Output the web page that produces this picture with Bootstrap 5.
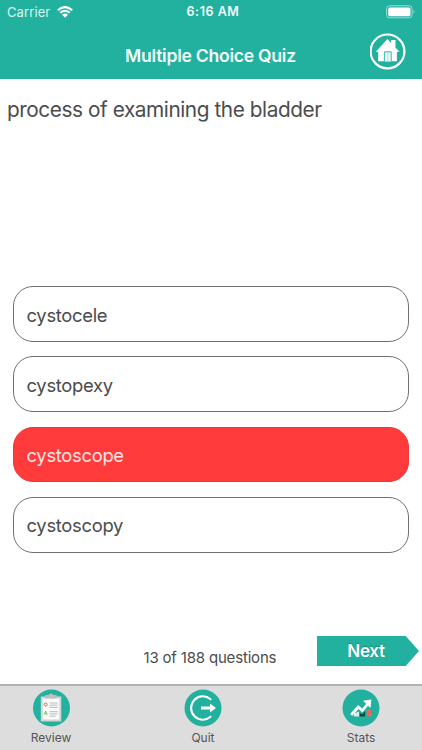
<!DOCTYPE html>
<html lang="en">
<head>
<meta charset="utf-8">
<meta name="viewport" content="width=device-width, initial-scale=1">
<title>Multiple Choice Quiz</title>
<link href="https://cdn.jsdelivr.net/npm/bootstrap@5.3.0/dist/css/bootstrap.min.css" rel="stylesheet">
<style>
  :root { --teal: #22b19f; }
  body { font-family: Inter, "Liberation Sans", sans-serif; color: #4c4c4c; background: #fff; }
  .screen { height: 750px; }
  .top-area { height: 79px; background: var(--teal); }
  .status-row { height: 24px; font-size: 13px; line-height: 24px; }
  .status-row > div { flex: 1 1 0; }
  .carrier { padding-left: 7px; letter-spacing: .1px; color: #dcf6f2; }
  .wifi { margin-left: 7px; }
  .clock { font-weight: 600; font-size: 12.5px; letter-spacing: .55px; padding: 0 0 1px 3px; color: #effbf9; }
  .battery { padding-right: 6px; }
  .title-row { height: 55px; grid-template-columns: 52px 1fr 52px; padding-top: 1px; }
  .quiz-title { font-size: 17.6px; font-weight: 600; line-height: 61px; letter-spacing: -.27px; padding-right: 1px; color: #f2fcfa; }
  .question { font-size: 20.8px; line-height: 28px; height: 207px; padding: 17px 7px 0; letter-spacing: -.44px; }
  .answers { gap: 14.6px; padding: 0 13px 0 12.5px; }
  .answer { height: 55.7px; border: 1px solid #707070; border-radius: 20px; font-size: 18.4px; letter-spacing: -.3px; line-height: 1; padding: 2px 13px 0; background: #fff; color: #4c4c4c; }
  .answer.wrong { background: #ff3b3b; border-color: #e83838; color: #ffe4e4; }
  .progress-line { height: 48px; padding-right: 3px; }
  .counter { font-size: 15px; line-height: 20px; letter-spacing: -.18px; padding: 12px 0 0 143.5px; }
  .next-btn { width: 102px; height: 30px; color: #fff; font-size: 17px; font-weight: 600; line-height: 29px; letter-spacing: -.3px; padding: 0 4px 0 0; background: var(--teal); clip-path: polygon(0 0, 87% 0, 100% 50%, 87% 100%, 0 100%); text-shadow: 0 -1px 1px #1a8a7b; }
  .tab-strip { height: 66px; background: #ddd; border-top: 2px solid #b2b2b2; font-size: 12px; line-height: 16px; color: #555; padding: 0 31px 0 21px; }
  .tab-strip a { width: 60px; color: inherit; padding-top: 3px; gap: 3px; }
  .tab-mid { margin-right: 6px; }
  svg { display: block; }
</style>
<script src="https://cdn.jsdelivr.net/npm/bootstrap@5.3.0/dist/js/bootstrap.bundle.min.js"></script>
</head>
<body>
<div class="screen d-flex flex-column overflow-hidden">
  <header class="top-area text-white">
    <div class="status-row d-flex align-items-center">
      <div class="carrier d-flex align-items-center">
        <span>Carrier</span>
        <svg class="wifi" width="16" height="12" viewBox="0 0 16 12" fill="none" stroke="#fff" stroke-width="2.1"><path d="M.8 4.2Q8-2.1 15.2 4.2M3.3 6.8Q8 2.7 12.7 6.8"/><path d="M5 8.7Q8 6.2 11 8.7L8 11.7Z" fill="#fff" stroke="none"/></svg>
      </div>
      <div class="clock text-center"><span>6:16 AM</span></div>
      <div class="battery d-flex justify-content-end">
        <svg width="30" height="14" viewBox="0 0 30 14"><rect x=".6" y=".8" width="25.5" height="12" rx="3" fill="none" stroke="#9bded5"/><rect x="2.2" y="2.4" width="22.3" height="8.8" rx="1.6" fill="#fff"/><path d="M27.6 4.9q2 1.9 0 3.8z" fill="#9bded5"/></svg>
      </div>
    </div>
    <div class="title-row d-grid align-items-start">
      <span></span>
      <div class="quiz-title text-center"><span>Multiple Choice Quiz</span></div>
      <a href="#" class="d-block pt-2" aria-label="Home">
        <svg width="36" height="37" viewBox="0 0 36 37"><circle cx="17.5" cy="18.4" r="16.9" fill="none" stroke="#fff" stroke-width="2.2"/><path d="M5.8 18.8L17.5 6.1l3.6 3.9V7h4.4v7.8l4 4h-2.6v9.4H8.2v-9.4z" fill="#fff"/><path d="M14.4 28.4v-9.6h6.8v9.6" fill="#e8faf7" stroke="#22b19f" stroke-width=".9"/><path d="M17.8 19.4v8.6" stroke="#8fd8cf" stroke-width=".7"/></svg>
      </a>
    </div>
  </header>
  <main class="flex-grow-1">
    <div class="question"><span>process of examining the bladder</span></div>
    <div class="answers d-flex flex-column">
      <button class="answer d-flex align-items-center"><span>cystocele</span></button>
      <button class="answer d-flex align-items-center"><span>cystopexy</span></button>
      <button class="answer wrong d-flex align-items-center"><span>cystoscope</span></button>
      <button class="answer d-flex align-items-center"><span>cystoscopy</span></button>
    </div>
  </main>
  <div class="progress-line d-flex align-items-start justify-content-between">
    <span class="counter text-nowrap">13 of 188 questions</span>
    <button class="next-btn border-0 text-center"><span>Next</span></button>
  </div>
  <footer class="tab-strip d-flex justify-content-between text-center">
    <a href="#" class="text-decoration-none d-flex flex-column align-items-center">
      <svg width="38" height="38" viewBox="0 0 38 38"><circle cx="19.5" cy="19" r="18.5" fill="#22b19f"/><path d="M8.8 7.5h20.5v25H8.8z" fill="#d4d4d1"/><path d="M10.8 9.5h16.5v21H10.8z" fill="#fafafa"/><path d="M13.3 6h3q2.7-3 5.4 0h3v3.5H13.3z" fill="#bebfbe"/><circle cx="13.7" cy="15.5" r="1.5" fill="none" stroke="#d96954"/><path d="M12.2 25.8l1.5-3.8 1.5 3.8m-2.5-1.2h2" fill="none" stroke="#79c66e"/><path d="M17.6 14h8m-8 2.2h8m-8 2.2h8m-8 4.3h8m-8 2.2h8m-8 2.2h6" stroke="#b3bec7"/></svg>
      <span>Review</span>
    </a>
    <a href="#" class="tab-mid text-decoration-none d-flex flex-column align-items-center">
      <svg width="38" height="38" viewBox="0 0 38 38"><circle cx="19" cy="19" r="18.5" fill="#22b19f"/><path d="M26.5 10.2A11.7 11.7 0 1 0 26.5 27.8" fill="none" stroke="#fff" stroke-width="2.1" stroke-linecap="round"/><path d="M17 17.4h9v-3l6 4.6-6 4.6v-3h-9z" fill="#fff"/></svg>
      <span>Quit</span>
    </a>
    <a href="#" class="text-decoration-none d-flex flex-column align-items-center">
      <svg width="38" height="38" viewBox="0 0 38 38"><circle cx="19" cy="19" r="18.5" fill="#22b19f"/><path d="M12 24.5l5-2v5h-5z" fill="#d8eee7"/><path d="M17.8 24l2.3 1.2 3-3v5.3h-5.3z" fill="#064f3e"/><path d="M24.8 20.5h4.4v7h-4.4z" fill="#e46a63"/><path d="M9.2 26l7-8 4.2 3.5 6-7.5" fill="none" stroke="#fff" stroke-width="2.8"/><path d="M21 11.8l8.3-1.3-.8 8.5z" fill="#fff"/></svg>
      <span>Stats</span>
    </a>
  </footer>
</div>
</body>
</html>
